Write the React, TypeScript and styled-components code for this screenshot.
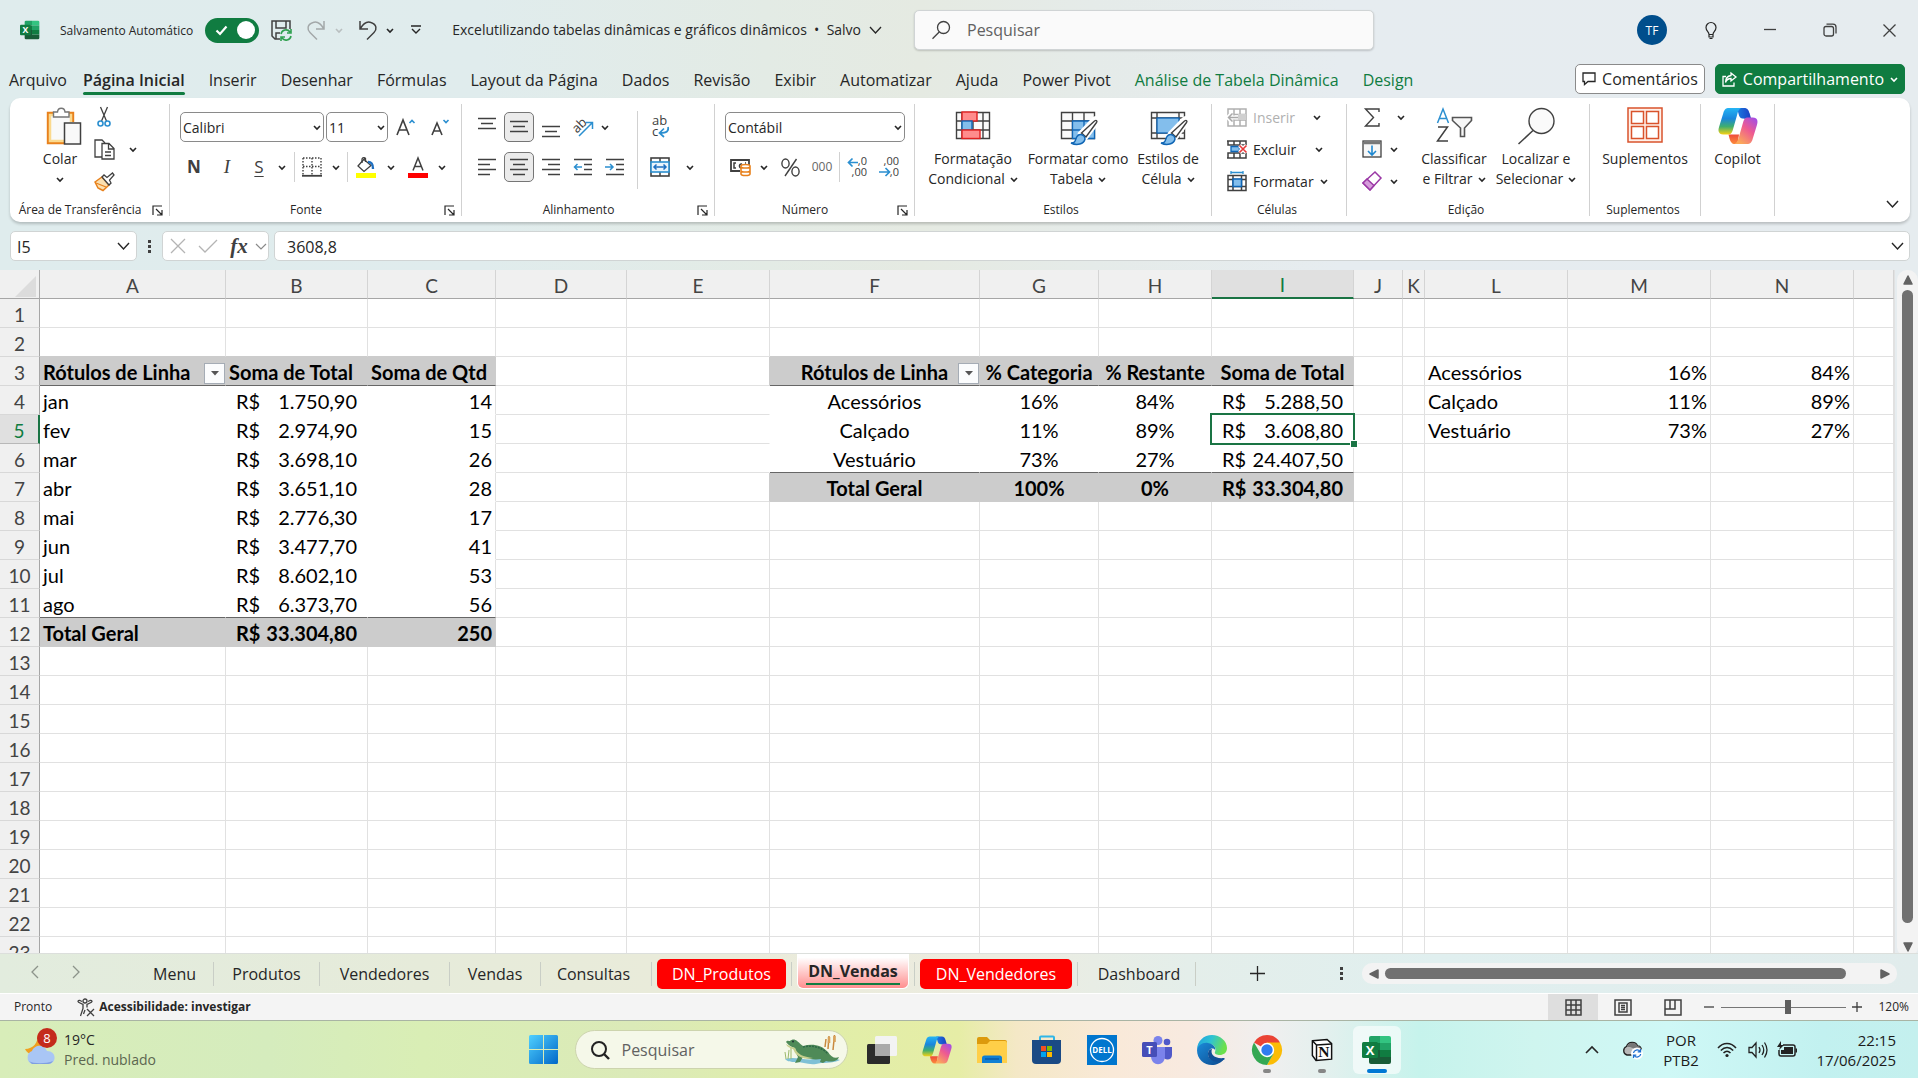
import React from "react";
import styled, { createGlobalStyle, css } from "styled-components";

const UI = `"Open Sans", "Noto Sans", sans-serif`;
const CELL = `Lato, "Open Sans", sans-serif`;
const GREEN = "#107c41";
const INK = "#262626";

const Global = createGlobalStyle`
  *, *::before, *::after { box-sizing: border-box; }
  body { margin: 0; font-family: ${UI}; color: ${INK}; overflow: hidden; }
  button, input, select { font: inherit; color: inherit; }
  button { border: 0; padding: 0; background: none; white-space: nowrap; }
  svg { display: block; flex: none; overflow: visible; }
`;

const Screen = styled.div`
  display: flex;
  flex-direction: column;
  height: 100vh;
  background: linear-gradient(90deg, #dfeced 0%, #e0eced 25%, #e3ebe5 40%, #e5eae2 48%, #e5ebe9 57%, #e6ecf0 70%, #e6ecef 100%);
`;

/* ---------- icons ---------- */

type IconProps = { w?: number; h?: number; box?: string; children?: React.ReactNode };
const Icon = ({ w = 20, h = w, box, children }: IconProps) => (
  <svg width={w} height={h} viewBox={box || `0 0 ${w} ${h}`} fill="none" stroke="#404040" strokeWidth="1.3" aria-hidden="true">
    {children}
  </svg>
);

const Chevron = ({ w = 8, color = "#262626", up = false, stroke = 1.6 }) => {
  const h = Math.round(w / 2) + 2;
  return (
    <Icon w={w + 2} h={h}>
      <path d={up ? `M1 ${h - 1}L${w / 2 + 1} 1L${w + 1} ${h - 1}` : `M1 1L${w / 2 + 1} ${h - 1}L${w + 1} 1`} stroke={color} strokeWidth={stroke} />
    </Icon>
  );
};

const ExcelLogo = ({ size = 20 }) => (
  <svg width={size} height={size} viewBox="0 0 30 30" aria-hidden="true">
    <path d="M9 1h9v7H7V3a2 2 0 0 1 2-2z" fill="#21a366" />
    <path d="M18 1h9a2 2 0 0 1 2 2v5H18z" fill="#33c481" />
    <path d="M7 8h11v7H7z" fill="#107c41" />
    <path d="M18 8h11v7H18z" fill="#21a366" />
    <path d="M18 15h11v7H18z" fill="#107c41" />
    <path d="M7 15h11v7h11v5a2 2 0 0 1-2 2H9a2 2 0 0 1-2-2z" fill="#185c37" />
    <rect x="0" y="7" width="16" height="16" rx="1.5" fill="#107c41" />
    <text x="8" y="20" fontFamily="Open Sans" fontWeight="700" fontSize="13" fill="#fff" textAnchor="middle">X</text>
  </svg>
);

const SaveSync = () => (
  <Icon w={21}>
    <path d="M9 19H4L1 16V1h18v8" strokeWidth="1.5" />
    <path d="M5 1v7h10V1M5 19v-6h4" strokeWidth="1.5" />
    <path d="M10 14a5 5 0 0 1 9-2M20 9v4h-4M20 16a5 5 0 0 1-9 2M10 21v-4h4" stroke="#2fa04f" strokeWidth="1.6" />
  </Icon>
);
const Undo = () => (
  <Icon w={20}>
    <path d="M2 1v8h8M2 9C5 4 9 1 13 2.500c6 2 6 7 3 10L9 19.500" strokeWidth="1.5" />
  </Icon>
);
const Redo = () => (
  <Icon w={20}>
    <path d="M18 1v8h-8M18 9C15 4 11 1 7 2.500c-6 2-6 7-3 10L11 19.500" stroke="#a3a8a9" strokeWidth="1.5" />
  </Icon>
);
const Customize = () => (
  <Icon w={10} h={10}>
    <path d="M0 1h10M1 4l4 4 4-4" strokeWidth="1.4" stroke="#262626" />
  </Icon>
);
const Magnifier = ({ size = 20 }) => (
  <Icon w={size} box="0 0 20 20">
    <circle cx="12.500" cy="7.500" r="6" />
    <path d="M8.200 12L1.500 18.700" />
  </Icon>
);
const Bulb = () => (
  <Icon w={12} h={17}>
    <path d="M4 12.500c0-3-3-3.500-3-7a5 5 0 0 1 10 0c0 3.500-3 4-3 7zM4 12.500V15h4v-2.500M4.500 16.500h3" strokeWidth="1.2" stroke="#262626" />
  </Icon>
);
const Paste = () => (
  <Icon w={44} h={40} box="-8 -1 44 40">
    <rect x="2" y="6" width="25" height="30" fill="#f9f9f9" stroke="none" />
    <path d="M8 6H2v30h16M21 6h6v9" stroke="#e8811c" strokeWidth="2.400" />
    <path d="M8 8H4v26h14M21 8h4v7" stroke="#fbd98d" strokeWidth="2.500" />
    <path d="M7.500 10V5h4c.5-5 7-5 7.500 0h4v5z" fill="#fff" stroke="#767676" strokeWidth="1.400" />
    <rect x="18.500" y="16" width="16" height="21" fill="#f9f9f9" stroke="#404040" strokeWidth="1.500" />
  </Icon>
);
const Cut = () => (
  <Icon w={14} h={20}>
    <path d="M3.500 0l6 14M10.500 0l-6 14" strokeWidth="1.300" />
    <circle cx="3.500" cy="16.500" r="2.500" stroke="#2b8fd0" strokeWidth="1.600" />
    <circle cx="10.500" cy="16.500" r="2.500" stroke="#2b8fd0" strokeWidth="1.600" />
  </Icon>
);
const Copy = () => (
  <Icon w={21}>
    <path d="M8 18H1V1h7l3 3" />
    <path d="M8 4.500h7l5 5V20H8zM14.500 5v5H20M11 13h6M11 16.500h6" fill="#fff" />
  </Icon>
);
const Painter = () => (
  <Icon w={21} h={19}>
    <path d="M1 10l7-5 7 8-6 5.500L6 17l-2-1z" fill="#fbe0b0" stroke="#e8811c" strokeWidth="1.500" />
    <path d="M2 11l10 4" stroke="#e8811c" />
    <path d="M8 5l2-2 3 2.500L18.500 1l1.500 2-4.500 5 1.500 3-2 2z" fill="#fff" />
  </Icon>
);
const Borders = () => (
  <Icon w={20}>
    <path d="M1 1h18M1 1v17M19 1v17M10 1v17M1 9.500h18" strokeDasharray="1.500 1.500" strokeWidth="1.400" />
    <path d="M0 18.800h20" strokeWidth="1.800" />
  </Icon>
);
const Fill = () => (
  <Icon w={20} h={21}>
    <path d="M8 2.500l7 6-7 6-6-5.500 7-8" />
    <path d="M6 6V2a2 2 0 0 1 3.500-.5V5" />
    <path d="M12 5c4 0 5 2 5 7" stroke="#1e6fc0" strokeWidth="2.400" />
    <rect x="0" y="16" width="20" height="5" fill="#ff0" stroke="none" />
  </Icon>
);
const FontColor = () => (
  <Icon w={20} h={21}>
    <path d="M5 13.500L10 1l5 12.500M6.600 9.500h6.800" strokeWidth="1.500" />
    <rect x="0" y="16" width="20" height="5" fill="#f00" stroke="none" />
  </Icon>
);
const GrowFont = () => (
  <Icon w={20} h={18}>
    <path d="M1 17L7 2l6 15M3 12h8" strokeWidth="1.600" />
    <path d="M13.500 5L16 2.500 18.500 5" stroke="#2b8fd0" strokeWidth="1.600" />
  </Icon>
);
const ShrinkFont = () => (
  <Icon w={19} h={18}>
    <path d="M1 17L6 5l5 12M3 13h6.500" strokeWidth="1.600" />
    <path d="M12.500 2L15 4.500 17.500 2" stroke="#2b8fd0" strokeWidth="1.600" />
  </Icon>
);
const Lines = ({ rows }: { rows: [number, number, number][] }) => (
  <Icon w={20}>
    {rows.map(([x, y, len]) => (
      <path key={y} d={`M${x} ${y}.5h${len}`} strokeWidth="1.500" />
    ))}
  </Icon>
);
const alignIcons: Record<string, [number, number, number][]> = {
  top: [[1, 1, 18], [4, 6, 12], [1, 11, 18]],
  middle: [[1, 4, 18], [4, 9, 12], [1, 14, 18]],
  bottom: [[1, 9, 18], [4, 14, 12], [1, 19, 18]],
  left: [[1, 2, 18], [1, 7, 12], [1, 12, 18], [1, 17, 12]],
  center: [[1, 2, 18], [4, 7, 12], [1, 12, 18], [4, 17, 12]],
  right: [[1, 2, 18], [7, 7, 12], [1, 12, 18], [7, 17, 12]],
};
const Indent = ({ out = false }) => (
  <Icon w={20}>
    <path d="M1 2.500h18M11 7.500h8M11 12.500h8M1 17.500h18" strokeWidth="1.500" />
    <path d={out ? "M9 10H1.500M4.500 7l-3 3 3 3" : "M0 10h8M5 7l3 3-3 3"} stroke="#2b8fd0" strokeWidth="1.500" />
  </Icon>
);
const Orient = () => (
  <Icon w={22}>
    <text x="0" y="14" fontFamily="Open Sans" fontSize="13" fill="#404040" stroke="none" transform="rotate(-45 7 10)">ab</text>
    <path d="M7 20L20 7M14 6.500h6.500V13" stroke="#2b8fd0" strokeWidth="1.500" />
  </Icon>
);
const Wrap = () => (
  <Icon w={20} h={22}>
    <text x="2" y="9" fontFamily="Open Sans" fontSize="13" fill="#404040" stroke="none">ab</text>
    <text x="2" y="20" fontFamily="Open Sans" fontSize="13" fill="#404040" stroke="none">c</text>
    <path d="M18 11c1 4-1 6-8 6M14 12.500L9.500 17l4.500 4" stroke="#2b8fd0" strokeWidth="1.700" />
  </Icon>
);
const Merge = () => (
  <Icon w={20}>
    <rect x="1" y="1" width="18" height="18" strokeWidth="1.600" />
    <path d="M10 1v4M10 15v4" strokeWidth="1.500" />
    <rect x="1" y="5" width="18" height="10" fill="#eaf4fb" stroke="#2b8fd0" strokeWidth="1.600" />
    <path d="M4 10h12M6.500 7.500L4 10l2.500 2.500M13.500 7.500L16 10l-2.500 2.500" stroke="#1e6fc0" strokeWidth="1.500" />
  </Icon>
);
const Currency = () => (
  <Icon w={21} h={18}>
    <path d="M10 13H1V2h18v5" strokeWidth="1.800" />
    <path d="M6 5H4v5h2M12 6a2 2 0 1 0-1 4M15 5h1" strokeWidth="1.500" />
    <path d="M11 8v8c0 2 9 2 9 0V8c0-2-9-2-9 0zM11 8.500c0 2 9 2 9 0M11 12.500c0 2 9 2 9 0" fill="#fff" stroke="#e8811c" strokeWidth="1.600" />
  </Icon>
);
const Percent = () => (
  <Icon w={19} h={19}>
    <path d="M15.500 1L4 18" strokeWidth="1.400" />
    <ellipse cx="4.500" cy="5.500" rx="3.600" ry="4.500" strokeWidth="1.400" />
    <ellipse cx="14.500" cy="13.500" rx="3.600" ry="4.500" strokeWidth="1.400" />
  </Icon>
);
const Decimals = ({ less = false }) => (
  <Icon w={21} h={20}>
    <text x="20" y="8" textAnchor="end" fontFamily="Open Sans" fontSize="11" fill="#404040" stroke="none">{less ? ",00" : ",0"}</text>
    <text x="20" y="19" textAnchor="end" fontFamily="Open Sans" fontSize="11" fill="#404040" stroke="none">{less ? ",0" : ",00"}</text>
    <path d={less ? "M0 15h10M6.500 11l4 4-4 4" : "M11 5.500H2M5.500 1.500l-4 4 4 4"} stroke="#2b8fd0" strokeWidth="1.700" />
  </Icon>
);
const CondFormat = () => (
  <Icon w={36} h={40}>
    <path d="M1.500 6.500h33v26h-33zM1.500 15h33M1.500 24h33M7 6v26M18 6v26M28 6v26" fill="#fafafa" strokeWidth="1.400" />
    <rect x="7" y="6" width="15" height="9" fill="#ff8c8c" stroke="#e02020" strokeWidth="1.400" />
    <rect x="7" y="15" width="10" height="9" fill="#83beec" stroke="#1066b5" strokeWidth="1.400" />
    <rect x="7" y="24" width="18" height="8.500" fill="#ff8c8c" stroke="#e02020" strokeWidth="1.400" />
  </Icon>
);
const Brush = () => (
  <>
    <path d="M21 27L34 13.500c3-2 4.500 0 3 2.500L26 31z" fill="#fff" stroke="#fff" strokeWidth="5" />
    <path d="M21.500 27L34.500 15c2-1.500 3 0 2 1.500L26 31z" fill="#fff" strokeWidth="1.400" />
    <path d="M11 37c5 0 4-3 6-6.500 3-4 8-1 8 2.500-1 5-8 7-14 4z" fill="#83beec" stroke="#1066b5" strokeWidth="1.400" />
  </>
);
const TableFormat = () => (
  <Icon w={36} h={40}>
    <path d="M1.500 6.500h33v26h-33zM1.500 15h33M1.500 24h33M12.500 6v26M24 6v26" fill="#fafafa" strokeWidth="1.400" />
    <path d="M12.500 15h22v17.500h-22z" fill="#83beec" stroke="#1066b5" />
    <path d="M12.500 24h22M24 15v17" stroke="#1066b5" />
    <Brush />
  </Icon>
);
const CellStyle = () => (
  <Icon w={36} h={40}>
    <path d="M1.500 6.500h33v26h-33zM1.500 12h33M1.500 27h33M7 6v26M29 6v26" fill="#fafafa" strokeWidth="1.400" />
    <rect x="7" y="12" width="22" height="15" fill="#83beec" stroke="#1066b5" />
    <Brush />
  </Icon>
);
const InsertCells = () => (
  <Icon w={20} h={19}>
    <path d="M1 1h18v17H1zM1 6.500h18M1 12h18M7 1v17M13 1v17" stroke="#b0b0b0" strokeWidth="1.500" />
    <rect x="11" y="6" width="8" height="6" fill="#d0d0d0" stroke="none" />
    <path d="M11 9.500H1M5 5L1 9.500 5 14" stroke="#fff" strokeWidth="4" />
    <path d="M11 9.500H1.500M5.500 5.500l-4 4 4 4" stroke="#a8a8a8" strokeWidth="1.500" />
  </Icon>
);
const DeleteCells = () => (
  <Icon w={20} h={19}>
    <path d="M0 1h19v4M1 1v4h18M1 18v-5h18M0 18h19v-5M7 1v4M13 1v4M7 13v5M13 13v5" strokeWidth="1.500" />
    <path d="M4 6.500h7l2 2.500-2 2.500H4z" fill="#83beec" stroke="#1066b5" />
    <path d="M12.500 5.500l7 7M19.500 5.500l-7 7" stroke="#fff" strokeWidth="4" />
    <path d="M12.500 5.500l7 7M19.500 5.500l-7 7" stroke="#e63a3a" strokeWidth="1.600" />
  </Icon>
);
const FormatCells = () => (
  <Icon w={20} h={20}>
    <path d="M1 4.500h18v15H1zM1 8.500h18M1 15.500h18M6 4.500v15M14.500 4.500v15" strokeWidth="1.500" />
    <rect x="6" y="8" width="8.500" height="7.500" fill="#83beec" stroke="#1066b5" strokeWidth="1.500" />
    <path d="M4 1.500h12M4 0v3M16 0v3" stroke="#2b8fd0" />
  </Icon>
);
const Sigma = () => (
  <Icon w={16} h={19}>
    <path d="M15 4V1H1.500l8 8.500-8 8.500H15v-3" strokeWidth="1.400" />
  </Icon>
);
const FillDown = () => (
  <Icon w={20} h={18}>
    <rect x="1" y="1" width="18" height="16" fill="#f7f7f7" />
    <path d="M1 3h18" strokeWidth="2.500" stroke="#777" />
    <path d="M10 5.500V15M6 11l4 4 4-4" stroke="#1e88d0" strokeWidth="1.600" />
  </Icon>
);
const Eraser = () => (
  <Icon w={20}>
    <path d="M1 12L13 1l6 6L8 19z" fill="#fff" stroke="#9a37a5" strokeWidth="1.500" />
    <path d="M1 12l4-4 7 6.500L8 19z" fill="#d69ddb" stroke="#9a37a5" strokeWidth="1.500" />
  </Icon>
);
const SortFilter = () => (
  <Icon w={38} h={40}>
    <path d="M2.500 17L8 3l5.500 14M4.500 12.500h7" stroke="#2b8fd0" strokeWidth="1.500" />
    <path d="M3 21h9.500L2.500 35H13" strokeWidth="1.500" />
    <path d="M17.500 11.500h19v3L29.500 22v8.500h-4V22l-8-7.500z" fill="#f7f7f7" stroke="#555" strokeWidth="1.600" />
  </Icon>
);
const FindSelect = () => (
  <Icon w={38} h={40}>
    <circle cx="24.500" cy="15" r="12.500" fill="#fafafa" strokeWidth="1.400" />
    <path d="M16 24.500L1.500 38" strokeWidth="1.500" />
  </Icon>
);
const Addins = () => (
  <Icon w={36} h={40}>
    <g stroke="#d9532c" strokeWidth="1.500">
      <rect x="1" y="2" width="34" height="34" fill="#fff1ea" />
      <rect x="4.500" y="5.500" width="12" height="12" fill="#fff" />
      <rect x="19.500" y="5.500" width="12" height="12" fill="#fff" />
      <rect x="4.500" y="20.500" width="12" height="12" fill="#fff" />
      <rect x="19.500" y="20.500" width="12" height="12" fill="#fff" />
    </g>
  </Icon>
);
const Copilot = ({ size = 38, id = "a" }) => (
  <svg width={size} height={size} viewBox="0 0 38 38" aria-hidden="true">
    <defs>
      <linearGradient id={`cb${id}`} x1="0" y1="0" x2="0" y2="1">
        <stop offset="0" stopColor="#25b4f4" /><stop offset=".4" stopColor="#1a86dc" /><stop offset=".7" stopColor="#3fae6e" /><stop offset="1" stopColor="#f6d112" />
      </linearGradient>
      <linearGradient id={`cd${id}`} x1="0" y1="0" x2="1" y2="0">
        <stop offset="0" stopColor="#1c7be0" /><stop offset="1" stopColor="#1b3fc4" />
      </linearGradient>
      <linearGradient id={`cp${id}`} x1="1" y1="0" x2=".3" y2="1">
        <stop offset="0" stopColor="#9a4cf0" /><stop offset=".5" stopColor="#ee5a91" /><stop offset="1" stopColor="#fba95a" />
      </linearGradient>
      <linearGradient id={`co${id}`} x1="0" y1="0" x2="0" y2="1">
        <stop offset="0" stopColor="#ef4c3a" /><stop offset="1" stopColor="#fb8a3c" />
      </linearGradient>
    </defs>
    <path d="M18 2h7c3 0 4 2 5 5l1.500 5H26c-3 0-5 0-6-3z" fill={`url(#cd${id})`} />
    <path d="M10 27h10l-1 6c-1 3-1 3-3 3-3 0-4-2-5-5z" fill={`url(#co${id})`} />
    <path d="M10 2h12c-2 1-3 3-4 7l-4 14c-1 3-2 4-4 4H5c-5 0-5-4-4-7L5 7c1-4 3-5 5-5z" fill={`url(#cb${id})`} />
    <path d="M28 36H16c2-1 3-3 4-7l4-14c1-3 2-4 4-4h5c5 0 5 4 4 7l-4 13c-1 4-3 5-5 5z" fill={`url(#cp${id})`} />
  </svg>
);
const Launcher = () => (
  <Icon w={11} h={11}>
    <path d="M10 1H1v9M4 4l6 6M10 5v5H5" stroke="#262626" strokeWidth="1.200" />
  </Icon>
);

/* ---------- title bar ---------- */

const TitleBar = styled.header`
  display: grid;
  grid-template-columns: 914fr 460fr 544fr;
  align-items: center;
  height: 60px;
  flex: none;
`;
const Quick = styled.div<{ $gap?: number }>`
  display: flex;
  align-items: center;
  gap: ${(p) => p.$gap ?? 12}px;
`;
const TitleLeft = styled(Quick)`
  padding-left: 20px;
  height: 60px;
`;
const Small = styled.span<{ $bold?: boolean }>`
  font-size: 12px;
  line-height: 18px;
  white-space: nowrap;
  font-weight: ${(p) => (p.$bold ? 700 : 400)};
`;
const AutoSave = styled.label`
  display: flex;
  align-items: center;
  gap: 12px;
  padding-left: 8px;
  font-size: 12px;
  white-space: nowrap;
`;
const Toggle = styled.span`
  display: grid;
  width: 54px;
  height: 25px;
  border-radius: 13px;
  background: ${GREEN};
  align-items: center;
  > * { grid-area: 1 / 1; }
  > svg { margin-left: 10px; }
`;
const ToggleInput = styled.input`
  appearance: none;
  margin: 0 4px 0 0;
  width: 18px;
  height: 18px;
  border-radius: 50%;
  background: #fff;
  justify-self: end;
`;
const Plain = styled.button<{ $w?: number; $h?: number }>`
  display: inline-flex;
  align-items: center;
  justify-content: center;
  flex: none;
  width: ${(p) => (p.$w ? `${p.$w}px` : "auto")};
  height: ${(p) => p.$h ?? 30}px;
`;
const DocTitle = styled.button`
  display: flex;
  align-items: center;
  gap: 8px;
  margin-left: 16px;
  font-size: 14px;
  line-height: 20px;
`;
const SearchBox = styled.label`
  display: flex;
  align-items: center;
  gap: 16px;
  height: 40px;
  padding: 0 16px;
  border: 1px solid #d0d4d5;
  border-radius: 5px;
  background: #fafafa;
  box-shadow: 0 1px 2px rgba(0, 0, 0, 0.18);
`;
const SearchInput = styled.input`
  flex: 1;
  min-width: 0;
  border: 0;
  padding: 0;
  background: none;
  font-size: 16px;
  outline: none;
  &::placeholder { color: #616161; opacity: 1; }
`;
const WindowKeys = styled.div`
  display: flex;
  justify-content: flex-end;
`;
const Avatar = styled.span`
  display: grid;
  place-items: center;
  width: 30px;
  height: 30px;
  border-radius: 50%;
  background: #004e8c;
  color: #fff;
  font-size: 12px;
`;

/* ---------- ribbon tabs ---------- */

const TabRow = styled.nav`
  display: flex;
  align-items: center;
  height: 38px;
  padding: 0 13px 0 9px;
  flex: none;
`;
const RibbonTab = styled.a<{ $on?: boolean; $ctx?: boolean }>`
  display: flex;
  flex-direction: column;
  margin-right: 24px;
  font-size: 16px;
  line-height: 24px;
  padding: 8px 0 3px;
  color: ${(p) => (p.$ctx ? "#107c41" : INK)};
  text-decoration: none;
  white-space: nowrap;
  font-weight: ${(p) => (p.$on ? 600 : 400)};
  &:first-child { margin-right: 16px; }
  &::after {
    content: "";
    height: 3px;
    border-radius: 2px;
    background: ${(p) => (p.$on ? GREEN : "transparent")};
  }
`;
const TabActions = styled.div`
  display: flex;
  gap: 10px;
  margin-left: auto;
`;
const ActionButton = styled.button<{ $primary?: boolean }>`
  display: flex;
  align-items: center;
  gap: 6px;
  height: 30px;
  padding: 0 6px;
  border: 1px solid ${(p) => (p.$primary ? GREEN : "#8a8a8a")};
  border-radius: 5px;
  background: ${(p) => (p.$primary ? GREEN : "#fff")};
  color: ${(p) => (p.$primary ? "#fff" : INK)};
  font-size: 16px;
`;

/* ---------- ribbon ---------- */

const Ribbon = styled.section`
  display: flex;
  height: 124px;
  margin: 0 8px 0 10px;
  padding: 6px 0;
  border-radius: 10px;
  background: #fff;
  box-shadow: 0 2px 3px rgba(0, 0, 0, 0.2);
  flex: none;
`;
const Group = styled.div<{ $w: number }>`
  display: flex;
  flex-direction: column;
  width: ${(p) => p.$w}px;
  border-right: 1px solid #d1d1d1;
  flex: none;
`;
const GroupBody = styled.div<{ $pad?: number; $center?: boolean }>`
  display: flex;
  flex: 1;
  padding-left: ${(p) => p.$pad ?? 0}px;
  justify-content: ${(p) => (p.$center ? "center" : "flex-start")};
`;
const GroupFoot = styled.div`
  display: flex;
  align-items: center;
  height: 12px;
  padding-right: 4px;
  font-size: 12px;
  line-height: 18px;
  white-space: nowrap;
`;
const FootLabel = styled.span`
  flex: 1;
  text-align: center;
`;
const TwoRows = styled.div`
  display: flex;
  flex-direction: column;
  gap: 10px;
  padding-top: 8px;
`;
const Row = styled.div<{ $gap?: number }>`
  display: flex;
  align-items: center;
  height: 30px;
  gap: ${(p) => p.$gap ?? 0}px;
`;
const ThreeRows = styled.div<{ $pad?: number }>`
  display: flex;
  flex-direction: column;
  padding: 0 0 0 ${(p) => p.$pad ?? 0}px;
`;
const SlimRow = styled.div`
  display: flex;
  align-items: center;
  height: 32px;
  margin-top: -3px;
  & + & { margin-top: 0; }
`;
const LabelledButton = styled.button<{ $dim?: boolean; $w: number }>`
  display: flex;
  align-items: center;
  gap: 6px;
  width: ${(p) => p.$w}px;
  height: 30px;
  font-size: 14px;
  color: ${(p) => (p.$dim ? "#b0b0b0" : INK)};
`;
const Big = styled.button<{ $w: number }>`
  display: flex;
  flex-direction: column;
  align-items: center;
  width: ${(p) => p.$w}px;
  padding-top: 2px;
  font-size: 14px;
  line-height: 20px;
  > svg { margin-bottom: 3px; }
`;
const BigLine = styled.span`
  display: flex;
  align-items: center;
  gap: 5px;
  min-height: 20px;
`;
const Sep = styled.span<{ $m?: number }>`
  width: 1px;
  height: 30px;
  margin: 0 ${(p) => p.$m ?? 2}px;
  background: #d1d1d1;
  flex: none;
`;
const TallSep = styled(Sep)`
  height: 78px;
  margin: 7px 7px 0;
`;
const Picker = styled.div<{ $w: number }>`
  display: grid;
  align-items: center;
  width: ${(p) => p.$w}px;
  > * { grid-area: 1 / 1; }
  > svg { justify-self: end; margin-right: 3px; pointer-events: none; }
`;
const PickerSelect = styled.select`
  appearance: none;
  width: 100%;
  height: 30px;
  padding: 0 2px;
  border: 1px solid #8a8a8a;
  border-radius: 5px;
  background: #fff;
  font-size: 14px;
`;
const Tool = styled.button<{ $on?: boolean; $w?: number }>`
  display: grid;
  place-items: center;
  width: ${(p) => p.$w ?? 30}px;
  height: 30px;
  border-radius: 5px;
  flex: none;
  ${(p) => p.$on && css`border: 1px solid #767676; background: #ebebeb;`}
`;
const Letter = styled.span<{ $kind: "b" | "i" | "u" | "n" }>`
  font-size: ${(p) => (p.$kind === "n" ? 12 : 17)}px;
  line-height: 20px;
  color: ${(p) => (p.$kind === "n" ? "#666" : "#404040")};
  ${(p) => p.$kind === "b" && "font-weight: 700;"}
  ${(p) => p.$kind === "i" && `font-style: italic; font-family: "Liberation Serif", serif; font-size: 19px;`}
  ${(p) => p.$kind === "u" && "text-decoration: underline; text-underline-offset: 3px;"}
`;

const Drop = ({ w = 18, label }: { w?: number; label: string }) => (
  <Plain $w={w} aria-label={label}><Chevron w={6} /></Plain>
);
const CollapseSlot = styled.div`
  display: flex;
  align-items: flex-end;
  padding-right: 2px;
`;
const Spacer = styled.span`
  flex: 1;
`;

/* ---------- formula bar ---------- */

const FormulaBar = styled.div`
  display: flex;
  align-items: center;
  height: 48px;
  padding: 0 8px 0 10px;
  flex: none;
`;
const Field = styled.div<{ $w?: number }>`
  display: flex;
  align-items: center;
  height: 30px;
  border: 1px solid #d0d4d4;
  border-radius: 5px;
  background: #fff;
  ${(p) => (p.$w ? `width: ${p.$w}px; flex: none;` : "flex: 1; margin-left: 5px;")}
`;
const FieldInput = styled.input<{ $pad: number }>`
  flex: 1;
  min-width: 0;
  height: 28px;
  border: 0;
  padding: 1px 0 0 ${(p) => p.$pad}px;
  background: none;
  font-size: 16px;
  outline: none;
`;
const Fx = styled.span`
  font: italic 700 21px "Liberation Serif", serif;
  color: #404040;
`;
const Dots = styled.span<{ $m: number }>`
  display: flex;
  flex-direction: column;
  gap: 2px;
  margin: 0 ${(p) => p.$m}px;
  &::before, &::after, > i { content: ""; width: 3px; height: 3px; background: #404040; }
`;

/* ---------- sheet ---------- */

const SheetArea = styled.main`
  display: flex;
  flex: 1;
  min-height: 0;
`;
const GridView = styled.div`
  flex: 1;
  min-width: 0;
  overflow: hidden;
  background: #fff;
  border-right: 1px solid #e1e1e1;
`;
const Grid = styled.table`
  width: 100%;
  table-layout: fixed;
  border-collapse: separate;
  border-spacing: 0;
  font-family: ${CELL};
  font-size: 19px;
  line-height: 25px;
  color: #000;
`;
const Head = styled.th<{ $on?: boolean }>`
  height: 29px;
  padding: 2px 0 0;
  font-weight: 400;
  color: ${(p) => (p.$on ? "#107c41" : "#444")};
  background: ${(p) => (p.$on ? "#e0e0e0" : "#f0f0f0")};
  border-bottom: ${(p) => (p.$on ? "2px solid #1a7444" : "1px solid #a6a6a6")};
  border-right: 1px solid #d4d4d4;
`;
const Corner = styled(Head)`
  border-right-color: #ababab;
  > svg { margin: 2px 3px 0 auto; }
`;
const RowHead = styled.th<{ $on?: boolean }>`
  height: 29px;
  padding: 2px 0 0;
  font-weight: 400;
  color: ${(p) => (p.$on ? "#107c41" : "#444")};
  background: ${(p) => (p.$on ? "#e0e0e0" : "#f0f0f0")};
  border-bottom: 1px solid ${(p) => (p.$on ? "#b8b8b8" : "#d8d8d8")};
  border-right: ${(p) => (p.$on ? "2px solid #1a7444" : "1px solid #a6a6a6")};
`;
type CellLook = { $align?: string; $bold?: boolean; $fill?: boolean; $r?: string; $b?: string; $money?: boolean };
const Cell = styled.td<CellLook>`
  position: relative;
  height: 29px;
  padding: ${(p) => (p.$money ? "2px 10px 0" : "2px 3px 0")};
  font-size: 20px;
  white-space: nowrap;
  text-align: ${(p) => p.$align || "left"};
  font-weight: ${(p) => (p.$bold ? 700 : 400)};
  background: ${(p) => (p.$fill ? "#ccc" : "#fff")};
  border-right: 1px solid ${(p) => p.$r || "#e1e1e1"};
  border-bottom: 1px solid ${(p) => p.$b || "#e1e1e1"};
`;
const Money = styled.span`
  display: flex;
  justify-content: space-between;
`;
const FilterButton = styled.button`
  position: absolute;
  right: 0;
  bottom: 1px;
  display: grid;
  place-items: center;
  width: 21px;
  height: 21px;
  border: 1px solid #a5acb5;
  background: #fbfcfd;
`;
const Selection = styled.span`
  position: absolute;
  inset: -2px;
  border: 2px solid #1a7444;
  z-index: 1;
  &::after {
    content: "";
    position: absolute;
    right: -4px;
    bottom: -4px;
    width: 6px;
    height: 6px;
    background: #1a7444;
    outline: 1px solid #fff;
  }
`;
const VScroll = styled.div`
  display: flex;
  flex-direction: column;
  align-items: center;
  gap: 5px;
  width: 21px;
  margin: 0 0 -4px 2px;
  padding: 5px 0 5px;
  border-radius: 10px;
  background: #f3f3f3;
`;
const Thumb = styled.span<{ $v?: boolean }>`
  border-radius: 6px;
  background: #717171;
  ${(p) => (p.$v ? "width: 11px; flex: 1; margin-bottom: 14px;" : "height: 11px; flex: 1; margin-right: 28px;")}
`;

const columns: [string, number | null][] = [
  ["A", 186], ["B", 142], ["C", 128], ["D", 131], ["E", 143], ["F", 210], ["G", 119], ["H", 113],
  ["I", 142], ["J", 49], ["K", 22], ["L", 143], ["M", 143], ["N", 143], ["", null],
];

const data: Record<string, string> = {};
const put = (row: number, cols: string, values: string[]) => values.forEach((v, i) => { data[cols[i] + row] = v; });
put(3, "ABC", ["Rótulos de Linha", "Soma de Total", "Soma de Qtd"]);
[
  ["jan", "1.750,90", "14"], ["fev", "2.974,90", "15"], ["mar", "3.698,10", "26"], ["abr", "3.651,10", "28"],
  ["mai", "2.776,30", "17"], ["jun", "3.477,70", "41"], ["jul", "8.602,10", "53"], ["ago", "6.373,70", "56"],
  ["Total Geral", "33.304,80", "250"],
].forEach((v, i) => put(4 + i, "ABC", v));
put(3, "FGHI", ["Rótulos de Linha", "% Categoria", "% Restante", "Soma de Total"]);
[
  ["Acessórios", "16%", "84%", "5.288,50"], ["Calçado", "11%", "89%", "3.608,80"],
  ["Vestuário", "73%", "27%", "24.407,50"], ["Total Geral", "100%", "0%", "33.304,80"],
].forEach((v, i) => put(4 + i, "FGHI", v));
[["Acessórios", "16%", "84%"], ["Calçado", "11%", "89%"], ["Vestuário", "73%", "27%"]].forEach((v, i) => put(3 + i, "LMN", v));

const look = (col: string, row: number): CellLook => {
  const pivots = [{ cols: "ABC", last: 12, before: "" }, { cols: "FGHI", last: 7, before: "E" }];
  for (const p of pivots) {
    const banded = row === 3 || row === p.last;
    if (col && p.before === col && row >= 3 && row <= p.last) return { $r: banded ? "#ccc" : "#fff" };
    if (!col || !p.cols.includes(col)) continue;
    if (row === 2) return { $b: "#ccc" };
    if (row < 3 || row > p.last) continue;
    const end = col === p.cols[p.cols.length - 1];
    const money = row > 3 && (col === "B" || col === "I");
    return {
      $fill: banded,
      $bold: banded,
      $money: money,
      $align: p.cols === "FGHI" ? "center" : row > 3 && col === "C" ? "right" : "left",
      $r: banded ? "#ccc" : end ? "#e1e1e1" : "#fff",
      $b: row === 3 || row === p.last - 1 ? "#666" : banded ? "#ccc" : "#fff",
    };
  }
  return col === "M" || col === "N" ? { $align: "right" } : {};
};

const Sheet = () => (
  <Grid>
    <colgroup>
      <col width={40} />
      {columns.map(([name, w]) => <col key={name} width={w ?? undefined} />)}
    </colgroup>
    <thead>
      <tr>
        <Corner aria-label="Selecionar tudo"><Icon w={21} h={21}><path d="M21 0v21H0z" fill="#dcdcdc" stroke="none" /></Icon></Corner>
        {columns.map(([name]) => <Head key={name} scope="col" $on={name === "I"}>{name}</Head>)}
      </tr>
    </thead>
    <tbody>
      {Array.from({ length: 23 }, (_, i) => i + 1).map((row) => (
        <tr key={row}>
          <RowHead scope="row" $on={row === 5}>{row}</RowHead>
          {columns.map(([col]) => {
            const style = look(col, row);
            const text = col ? data[col + row] : undefined;
            return (
              <Cell key={col} {...style}>
                {style.$money ? <Money><span>R$</span><span>{text}</span></Money> : text}
                {row === 3 && (col === "A" || col === "F") && (
                  <FilterButton aria-label="Filtrar rótulos">
                    <Icon w={8} h={5}><path d="M0 0h8L4 4.500z" fill="#555" stroke="none" /></Icon>
                  </FilterButton>
                )}
                {col === "I" && row === 5 && <Selection />}
              </Cell>
            );
          })}
        </tr>
      ))}
    </tbody>
  </Grid>
);

/* ---------- sheet tabs ---------- */

const SheetBar = styled.div`
  display: flex;
  align-items: center;
  height: 40px;
  padding-right: 21px;
  border-top: 1px solid #dcdfdc;
  background: linear-gradient(90deg, #e2ecde 0%, #e6ebda 22%, #eaebda 38%, #ecece0 52%, #e4eeea 62%, #e0efef 75%, #e1ecec 100%);
  flex: none;
`;
const NavArrows = styled.div`
  display: flex;
  gap: 33px;
  padding: 0 56px 4px 31px;
`;
const TabList = styled.div`
  display: flex;
  align-items: center;
  align-self: stretch;
`;
const SheetTab = styled.button<{ $red?: boolean; $on?: boolean; $w: number }>`
  width: ${(p) => p.$w}px;
  height: 30px;
  flex: none;
  font-size: 16px;
  line-height: 24px;
  border-radius: 5px;
  ${(p) => p.$red && "background: #ff0000; color: #fff;"}
  ${(p) => p.$on && css`
    align-self: flex-start;
    height: 35px;
    padding: 5px 0 3px;
    border: 1px solid #fff;
    border-top: 0;
    border-radius: 0 0 6px 6px;
    font-weight: 700;
    background: linear-gradient(#fff 10%, #ff8f8f);
    span { display: block; margin: 0 8px; border-bottom: 2px solid ${GREEN}; }
  `}
`;
const TabSep = styled(Sep)`
  height: 24px;
  background: #c9cec6;
`;
const HScroll = styled.div`
  display: flex;
  align-items: center;
  gap: 6px;
  height: 21px;
  width: 535px;
  padding: 0 7px;
  border-radius: 10px;
  background: #f3f3f3;
`;

/* ---------- status bar ---------- */

const StatusBar = styled.footer`
  display: flex;
  align-items: center;
  height: 28px;
  padding: 0 9px 0 14px;
  background: #f4f4f4;
  border-top: 1px solid #fff;
  border-bottom: 1px solid #a9b4a4;
  flex: none;
`;
const Access = styled.button`
  display: flex;
  align-items: center;
  gap: 4px;
  margin-left: 25px;
`;
const ViewButton = styled.button<{ $on?: boolean }>`
  display: grid;
  place-items: center;
  width: 50px;
  height: 26px;
  background: ${(p) => (p.$on ? "#dedede" : "transparent")};
`;
const Zoom = styled.input`
  appearance: none;
  width: 125px;
  height: 16px;
  margin: 0 6px 0 1px;
  background: linear-gradient(#767676, #767676) center / 100% 1px no-repeat;
  &::-webkit-slider-thumb {
    appearance: none;
    width: 6px;
    height: 14px;
    background: #5f5f5f;
  }
`;
const ZoomText = styled(Small)`
  width: 47px;
  text-align: right;
`;

/* ---------- taskbar ---------- */

const Taskbar = styled.div`
  display: grid;
  grid-template-columns: 1fr auto 1fr;
  align-items: center;
  height: 57px;
  background: linear-gradient(90deg, #d8edb9 0%, #d5ecbd 14%, #d9eeb5 22%, #dbeab8 33%, #e0eea9 42%, #e6eda6 50%, #f4e8c6 53%, #f9e9d8 58%, #f8eae0 62%, #f0efef 66%, #e4f0ee 69%, #c6f3ec 74%, #cff5ef 80%, #cff8f6 87%, #c2f1f0 95%, #c4f0ee 100%);
  flex: none;
`;
const Weather = styled.button`
  display: flex;
  align-items: center;
  gap: 7px;
  padding-left: 25px;
  justify-self: start;
  text-align: left;
  font-size: 14px;
  line-height: 20px;
  div:last-child div:last-child { color: #5c6650; }
`;
const Center = styled.div`
  display: flex;
  align-items: center;
  gap: 7px;
`;
const Start = styled(Plain)`
  padding-left: 8px;
`;
const TaskSearch = styled.label`
  display: flex;
  align-items: center;
  gap: 12px;
  width: 273px;
  height: 39px;
  margin: 0 3px 0 6px;
  padding: 0 6px 0 14px;
  border: 1px solid #cdd4ae;
  border-radius: 20px;
  background: #f5f8e9;
`;
const App48 = styled.button<{ $on?: boolean; $run?: boolean }>`
  display: flex;
  flex-direction: column;
  align-items: center;
  justify-content: flex-end;
  width: 48px;
  height: 48px;
  border-radius: 6px;
  gap: ${(p) => (p.$run || p.$on ? 4 : 0)}px;
  padding-bottom: ${(p) => (p.$run || p.$on ? 1 : 9)}px;
  background: ${(p) => (p.$on ? "rgba(255,255,255,.6)" : "none")};
  ${(p) => (p.$run || p.$on) && css`
    &::after {
      content: "";
      width: ${p.$on ? 20 : 8}px;
      height: 4px;
      border-radius: 2px;
      background: ${p.$on ? "#0078d4" : "#868686"};
    }
  `}
`;
const Tray = styled.div`
  display: flex;
  align-items: center;
  justify-self: end;
  padding-right: 22px;
  font-size: 15px;
  line-height: 20px;
  color: #1b1b1b;
  white-space: nowrap;
`;
const TrayText = styled.div<{ $w: number; $right?: boolean }>`
  width: ${(p) => p.$w}px;
  text-align: ${(p) => (p.$right ? "right" : "center")};
`;

const WeatherIcon = () => (
  <svg width="32" height="44" viewBox="0 0 32 44" aria-hidden="true">
    <path d="M12 7c2 7-4 14-12 14 3 6 10 8 16 5l4-12z" fill="#f0a020" />
    <path d="M7 36a7 7 0 0 1 0-13c2-6 12-8 15 0 10 0 10 13 1 13z" fill="#a9c6f5" />
    <path d="M4 33c4 3 17 3 24 0-1 2-3 3-5 3H7z" fill="#7f9fe0" />
    <circle cx="22" cy="10" r="10" fill="#c42b1c" />
    <text x="22" y="15" fontFamily="Open Sans" fontSize="13" fill="#fff" textAnchor="middle">8</text>
  </svg>
);
const WinLogo = () => (
  <svg width="30" height="30" viewBox="0 0 30 30" aria-hidden="true">
    <defs><linearGradient id="win" x1="0" y1="0" x2="1" y2="1"><stop offset="0" stopColor="#4fd0ff" /><stop offset="1" stopColor="#0067c8" /></linearGradient></defs>
    <path d="M0 1.500Q0 0 1.500 0H14v14H0zM15 0h12.500Q29 0 29 1.500V14H15zM0 15h14v14H1.500Q0 29 0 27.500zM15 15h14v12.500q0 1.500-1.500 1.500H15z" fill="url(#win)" />
  </svg>
);
const Gator = () => (
  <svg width="58" height="30" viewBox="0 0 58 30" aria-hidden="true">
    <path d="M2 24c10-3 20 2 30 0 8-1 16-2 25 1-8 4-18 2-24 4-8 1-14-2-20-2-5 0-8 0-11-3z" fill="#7fc0d6" />
    <path d="M45 14l1-13M50 15l1.500-15M42 12l1-8" stroke="#c8893f" strokeWidth="1.500" fill="none" />
    <path d="M46 2v6M51.500 1v6" stroke="#d9a25a" strokeWidth="2.600" fill="none" />
    <path d="M5 24l1-9M8 24V12M3 24l-1-7" stroke="#9cb86a" fill="none" />
    <path d="M3 7c1-2 3-1 4-1 2-2 5-2 7 0 3 2 4 4 6 5 9-3 19-1 25 6 3 5 7 7 11 5-2 5-8 5-13 4l-3 2-3-1 1-3c-6 1-13 0-18-2l-3 5-5 1 3-6c-2-3-2-6-3-9-3-1-6-2-9-6z" fill="#4f8a58" />
    <path d="M3 9c3 2 6 3 9 4 2 6 8 9 18 10-6 2-13 0-17-4-2-2-2-4-3-5-3-1-6-2-7-5z" fill="#c7cf8d" />
    <path d="M20 12c9-2 19 0 25 7" stroke="#2f6848" strokeWidth="1.500" strokeDasharray="2 1" fill="none" />
    <circle cx="10" cy="6.500" r="1" fill="#223333" />
  </svg>
);
const TaskView = () => (
  <svg width="30" height="30" viewBox="0 0 30 30" aria-hidden="true">
    <rect x="0" y="9" width="23" height="20" rx="1.500" fill="#2b2b2b" />
    <rect x="8" y="1" width="22" height="20" rx="1.500" fill="#f3f3f3" />
    <path d="M8 9h15v12H9.500Q8 21 8 19.500z" fill="#aaa" />
  </svg>
);
const Explorer = () => (
  <svg width="30" height="30" viewBox="0 0 30 30" aria-hidden="true">
    <path d="M0 4q0-2 2-2h8l3 3h15q2 0 2 2v4H0z" fill="#dc9a0c" />
    <path d="M0 9h10l3-3h15q2 0 2 2v20H0z" fill="#ffcf48" />
    <path d="M5 28v-5q0-2.500 2.500-2.500h15Q25 20.500 25 23v5z" fill="#0f7fd4" />
    <path d="M8 24h14" stroke="#0a5aa8" strokeWidth="1.500" />
  </svg>
);
const Store = () => (
  <svg width="30" height="30" viewBox="0 0 30 30" aria-hidden="true">
    <path d="M8 6V2.500Q8 1.500 9 1.500h12q1 0 1 1V6" fill="none" stroke="#2fb6e8" strokeWidth="2" />
    <path d="M0 5h29v20q0 4-4 4H4q-4 0-4-4z" fill="#1a4a85" />
    <path d="M9 11h5v5H9z" fill="#f25022" /><path d="M15 11h5v5h-5z" fill="#7fba00" />
    <path d="M9 17h5v5H9z" fill="#00a4ef" /><path d="M15 17h5v5h-5z" fill="#ffb900" />
  </svg>
);
const Dell = () => (
  <svg width="30" height="30" viewBox="0 0 30 30" aria-hidden="true">
    <path d="M0 0h30v30H0z" fill="#0076ce" />
    <circle cx="15" cy="15" r="11.500" fill="none" stroke="#fff" strokeWidth="1.300" />
    <text x="15" y="18" fontFamily="Open Sans" fontWeight="700" fontSize="8" fill="#fff" textAnchor="middle">DELL</text>
  </svg>
);
const Teams = () => (
  <svg width="30" height="30" viewBox="0 0 30 30" aria-hidden="true">
    <circle cx="25" cy="7" r="3.300" fill="#5059c9" /><circle cx="16" cy="5.500" r="4.500" fill="#7b83eb" />
    <path d="M21 12h9v8c0 6-9 6-9 0z" fill="#5059c9" />
    <path d="M9 12h14v9c0 11-14 11-14 0z" fill="#7b83eb" />
    <rect x="0" y="7" width="15" height="15" rx="1.500" fill="#464eb8" />
    <text x="7.500" y="18.500" fontFamily="Open Sans" fontWeight="700" fontSize="11" fill="#fff" textAnchor="middle">T</text>
  </svg>
);
const Edge = () => (
  <svg width="30" height="30" viewBox="0 0 30 30" aria-hidden="true">
    <defs>
      <linearGradient id="eg" x1="0" y1="0" x2="1" y2=".3"><stop offset="0" stopColor="#1f9fe0" /><stop offset=".5" stopColor="#2fc3d2" /><stop offset="1" stopColor="#6be04c" /></linearGradient>
      <linearGradient id="ed" x1="0" y1="0" x2="1" y2="1"><stop offset="0" stopColor="#1b8ad8" /><stop offset="1" stopColor="#0c4a8f" /></linearGradient>
    </defs>
    <path d="M0 15C0 6 7 0 15 0s15 6 15 13c0 5-4 7-7 7s-6-1-5-3 1-7-5-8C7 8 2 11 0 15z" fill="url(#eg)" />
    <path d="M0 15c1-5 6-8 11-7 6 1 8 5 7 7-2-3-7-1-7 4 0 6 8 9 16 5-3 4-8 6-12 6C7 30 0 24 0 15z" fill="url(#ed)" />
    <path d="M11 19c0-2 1-5 4-5-2 5 2 10 12 9l1 1c-5 4-17 4-17-5z" fill="#114f96" />
  </svg>
);
const Chrome = () => (
  <svg width="30" height="30" viewBox="0 0 30 30" aria-hidden="true">
    <path d="M15 15L2 7.500A15 15 0 0 1 28 7.500z" fill="#ea4335" />
    <path d="M15 15V7.500h13A15 15 0 0 1 15 30l6.500-11.500z" fill="#fbbc05" />
    <path d="M15 15l6.500 3.700L15 30A15 15 0 0 1 2 7.500l6.500 11z" fill="#34a853" />
    <circle cx="15" cy="15" r="7.200" fill="#fff" /><circle cx="15" cy="15" r="5.700" fill="#2f7cf0" />
  </svg>
);
const Notion = () => (
  <svg width="22" height="30" viewBox="0 0 24 30" aria-hidden="true">
    <path d="M1.500 5l16-1.500L22.500 8v17l-17 1.500-4-5.500z" fill="#fff" stroke="#111" strokeWidth="1.600" />
    <path d="M1.500 5l4.500 4.500 16.500-1M6 9.500v17" stroke="#111" strokeWidth="1.600" fill="none" />
    <text x="14" y="23" fontFamily="Liberation Serif" fontWeight="700" fontSize="17" fill="#111" textAnchor="middle">N</text>
  </svg>
);

/* ---------- page ---------- */

const ribbonTabs = ["Arquivo", "Página Inicial", "Inserir", "Desenhar", "Fórmulas", "Layout da Página", "Dados", "Revisão", "Exibir", "Automatizar", "Ajuda", "Power Pivot", "Análise de Tabela Dinâmica", "Design"];
const sheetTabs: { name: string; w: number; gap?: number; red?: boolean; on?: boolean }[] = [
  { name: "Menu", w: 77 },
  { name: "Produtos", w: 105 },
  { name: "Vendedores", w: 129 },
  { name: "Vendas", w: 90 },
  { name: "Consultas", w: 105, gap: 5 },
  { name: "DN_Produtos", w: 129, gap: 5, red: true },
  { name: "DN_Vendas", w: 112, gap: 5, on: true },
  { name: "DN_Vendedores", w: 152, gap: 5, red: true },
  { name: "Dashboard", w: 112 },
];

const Foot = ({ label, launcher = false }: { label: string; launcher?: boolean }) => (
  <GroupFoot>
    <FootLabel>{label}</FootLabel>
    {launcher && <Plain $w={15} $h={12} aria-label={`Mais opções de ${label}`}><Launcher /></Plain>}
  </GroupFoot>
);

const Arrow = ({ d }: { d: string }) => (
  <Icon w={10} h={10}><path d={d} fill="#636363" stroke="#636363" strokeWidth="1.500" strokeLinejoin="round" /></Icon>
);

export default function App() {
  return (
    <Screen>
      <Global />
      <TitleBar>
        <TitleLeft>
          <ExcelLogo />
          <AutoSave>
            Salvamento Automático
            <Toggle>
              <Icon w={13} h={11}><path d="M1.500 5.500L5 9l6.500-7.500" stroke="#fff" strokeWidth="2.200" /></Icon>
              <ToggleInput type="checkbox" defaultChecked />
            </Toggle>
          </AutoSave>
          <Plain aria-label="Salvar"><SaveSync /></Plain>
          <Quick $gap={6}>
            <Plain $w={24} aria-label="Refazer"><Redo /></Plain>
            <Plain $w={10} aria-label="Opções de refazer"><Chevron w={6} color="#b9bfc0" /></Plain>
          </Quick>
          <Quick $gap={4}>
            <Plain $w={24} aria-label="Desfazer"><Undo /></Plain>
            <Plain $w={12} aria-label="Opções de desfazer"><Chevron w={6} /></Plain>
          </Quick>
          <Plain $w={16} aria-label="Personalizar"><Customize /></Plain>
          <DocTitle>
            <span>Excelutilizando tabelas dinâmicas e gráficos dinâmicos&nbsp; • &nbsp;Salvo</span>
            <Chevron w={11} stroke={1.3} />
          </DocTitle>
        </TitleLeft>
        <SearchBox>
          <Magnifier />
          <SearchInput placeholder="Pesquisar" aria-label="Pesquisar" />
        </SearchBox>
        <WindowKeys>
          <Plain $w={60} aria-label="Conta"><Avatar>TF</Avatar></Plain>
          <Plain $w={58} aria-label="Dicas"><Bulb /></Plain>
          <Plain $w={60} aria-label="Minimizar"><Icon w={12}><path d="M0 5.500h12" /></Icon></Plain>
          <Plain $w={60} aria-label="Restaurar"><Icon w={14}><rect x="1" y="3.500" width="9.500" height="9.500" rx="2" /><path d="M3.500 1.200H10q3 0 3 3v6.300" /></Icon></Plain>
          <Plain $w={58} aria-label="Fechar"><Icon w={13}><path d="M.5.5l12 12M12.500.5l-12 12" /></Icon></Plain>
        </WindowKeys>
      </TitleBar>

      <TabRow>
        {ribbonTabs.map((t, i) => <RibbonTab key={t} href="#" $on={i === 1} $ctx={i > 11}>{t}</RibbonTab>)}
        <TabActions>
          <ActionButton><Icon w={14} h={14}><path d="M1 1h12v8.500H6L2.500 12.500V9.500H1z" stroke="#262626" /></Icon>Comentários</ActionButton>
          <ActionButton $primary>
            <Icon w={15} h={15}><path d="M4 4.500H1v9.500h11v-3.500M9 1l5 4-5 4V6.500c-3 0-4.500 1-5.500 4 0-4 2-6.500 5.500-7z" stroke="#fff" /></Icon>
            Compartilhamento
            <Chevron w={6} color="#fff" />
          </ActionButton>
        </TabActions>
      </TabRow>

      <Ribbon>
        <Group $w={160}>
          <GroupBody $pad={22}>
            <Big $w={56}><Paste /><BigLine>Colar</BigLine><BigLine><Chevron w={6} /></BigLine></Big>
            <ThreeRows $pad={2}>
              <SlimRow><Plain $w={28} aria-label="Recortar"><Cut /></Plain></SlimRow>
              <SlimRow><Plain $w={28} aria-label="Copiar"><Copy /></Plain><Drop w={30} label="Opções de copiar" /></SlimRow>
              <SlimRow><Plain $w={28} aria-label="Pincel de formatação"><Painter /></Plain></SlimRow>
            </ThreeRows>
          </GroupBody>
          <Foot label="Área de Transferência" launcher />
        </Group>

        <Group $w={292}>
          <GroupBody $pad={10}>
            <TwoRows>
              <Row $gap={2}>
                <Picker $w={144}><PickerSelect aria-label="Fonte"><option>Calibri</option></PickerSelect><Chevron w={6} /></Picker>
                <Picker $w={62}><PickerSelect aria-label="Tamanho da fonte"><option>11</option></PickerSelect><Chevron w={6} /></Picker>
                <Tool $w={32} aria-label="Aumentar fonte"><GrowFont /></Tool>
                <Tool $w={32} aria-label="Diminuir fonte"><ShrinkFont /></Tool>
              </Row>
              <Row>
                <Tool $w={28}><Letter $kind="b">N</Letter></Tool>
                <Tool $w={38}><Letter $kind="i">I</Letter></Tool>
                <Tool $w={26}><Letter $kind="u">S</Letter></Tool>
                <Drop w={20} label="Opções de sublinhado" />
                <Sep />
                <Tool aria-label="Bordas"><Borders /></Tool>
                <Drop label="Opções de bordas" />
                <Sep />
                <Tool $w={32} aria-label="Cor de preenchimento"><Fill /></Tool>
                <Drop label="Opções de preenchimento" />
                <Tool $w={36} aria-label="Cor da fonte"><FontColor /></Tool>
                <Drop w={12} label="Opções de cor" />
              </Row>
            </TwoRows>
          </GroupBody>
          <Foot label="Fonte" launcher />
        </Group>

        <Group $w={253}>
          <GroupBody $pad={10}>
            <TwoRows>
              <Row $gap={2}>
                <Tool aria-label="Alinhar em cima"><Lines rows={alignIcons.top} /></Tool>
                <Tool $on aria-label="Alinhar no meio"><Lines rows={alignIcons.middle} /></Tool>
                <Tool aria-label="Alinhar embaixo"><Lines rows={alignIcons.bottom} /></Tool>
                <Tool aria-label="Orientação"><Orient /></Tool>
                <Drop w={10} label="Opções de orientação" />
              </Row>
              <Row $gap={2}>
                <Tool aria-label="Alinhar à esquerda"><Lines rows={alignIcons.left} /></Tool>
                <Tool $on aria-label="Centralizar"><Lines rows={alignIcons.center} /></Tool>
                <Tool aria-label="Alinhar à direita"><Lines rows={alignIcons.right} /></Tool>
                <Tool aria-label="Diminuir recuo"><Indent out /></Tool>
                <Tool aria-label="Aumentar recuo"><Indent /></Tool>
              </Row>
            </TwoRows>
            <TallSep />
            <TwoRows>
              <Row><Tool aria-label="Quebrar texto"><Wrap /></Tool></Row>
              <Row><Tool aria-label="Mesclar e centralizar"><Merge /></Tool><Drop w={30} label="Opções de mesclar" /></Row>
            </TwoRows>
          </GroupBody>
          <Foot label="Alinhamento" launcher />
        </Group>

        <Group $w={200}>
          <GroupBody $pad={10}>
            <TwoRows>
              <Row><Picker $w={180}><PickerSelect aria-label="Formato de número"><option>Contábil</option></PickerSelect><Chevron w={6} /></Picker></Row>
              <Row>
                <Tool aria-label="Formato de contabilização"><Currency /></Tool>
                <Drop w={18} label="Opções de moeda" />
                <Tool $w={34} aria-label="Porcentagem"><Percent /></Tool>
                <Tool><Letter $kind="n">000</Letter></Tool>
                <Sep />
                <Tool aria-label="Aumentar casas decimais"><Decimals /></Tool>
                <Tool $w={34} aria-label="Diminuir casas decimais"><Decimals less /></Tool>
              </Row>
            </TwoRows>
          </GroupBody>
          <Foot label="Número" launcher />
        </Group>

        <Group $w={297}>
          <GroupBody $pad={8}>
            <Big $w={100}><CondFormat /><BigLine>Formatação</BigLine><BigLine>Condicional <Chevron w={6} /></BigLine></Big>
            <Big $w={110}><TableFormat /><BigLine>Formatar como</BigLine><BigLine>Tabela <Chevron w={6} /></BigLine></Big>
            <Big $w={70}><CellStyle /><BigLine>Estilos de</BigLine><BigLine>Célula <Chevron w={6} /></BigLine></Big>
          </GroupBody>
          <Foot label="Estilos" />
        </Group>

        <Group $w={135}>
          <GroupBody $pad={15}>
            <ThreeRows>
              <SlimRow><LabelledButton $w={84} $dim><InsertCells />Inserir</LabelledButton><Drop w={12} label="Opções de inserir" /></SlimRow>
              <SlimRow><LabelledButton $w={86}><DeleteCells />Excluir</LabelledButton><Drop w={12} label="Opções de excluir" /></SlimRow>
              <SlimRow><LabelledButton $w={98}><FormatCells />Formatar<Chevron w={6} /></LabelledButton></SlimRow>
            </ThreeRows>
          </GroupBody>
          <Foot label="Células" />
        </Group>

        <Group $w={243}>
          <GroupBody $pad={10}>
            <ThreeRows>
              <SlimRow><Tool aria-label="Soma"><Sigma /></Tool><Drop w={28} label="Opções de soma" /></SlimRow>
              <SlimRow><Tool aria-label="Preencher"><FillDown /></Tool><Drop w={14} label="Opções de preencher" /></SlimRow>
              <SlimRow><Tool aria-label="Limpar"><Eraser /></Tool><Drop w={14} label="Opções de limpar" /></SlimRow>
            </ThreeRows>
            <Big $w={78}><SortFilter /><BigLine>Classificar</BigLine><BigLine>e Filtrar <Chevron w={6} /></BigLine></Big>
            <Big $w={86}><FindSelect /><BigLine>Localizar e</BigLine><BigLine>Selecionar <Chevron w={6} /></BigLine></Big>
          </GroupBody>
          <Foot label="Edição" />
        </Group>

        <Group $w={111}>
          <GroupBody $center><Big $w={100}><Addins /><BigLine>Suplementos</BigLine></Big></GroupBody>
          <Foot label="Suplementos" />
        </Group>

        <Group $w={74}>
          <GroupBody $center><Big $w={66}><Copilot size={40} /><BigLine>Copilot</BigLine></Big></GroupBody>
        </Group>
        <Spacer />
        <CollapseSlot><Plain $w={32} $h={24} aria-label="Recolher faixa"><Chevron w={11} stroke={1.5} /></Plain></CollapseSlot>
      </Ribbon>

      <FormulaBar>
        <Field $w={127}>
          <FieldInput $pad={6} defaultValue="I5" aria-label="Caixa de nome" />
          <Plain $w={26} $h={28} aria-label="Abrir caixa de nome"><Chevron w={11} stroke={1.4} /></Plain>
        </Field>
        <Dots $m={11}><i /></Dots>
        <Field $w={107}>
          <Plain $w={30} $h={28} aria-label="Cancelar"><Icon w={16}><path d="M1 1l14 14M15 1L1 15" stroke="#b4b4b4" /></Icon></Plain>
          <Plain $w={30} $h={28} aria-label="Inserir valor"><Icon w={20} h={14}><path d="M1 7l6 6L19 1" stroke="#b4b4b4" /></Icon></Plain>
          <Plain $w={32} $h={28} aria-label="Inserir função"><Fx>fx</Fx></Plain>
          <Chevron w={10} stroke={1.2} color="#8a8a8a" />
        </Field>
        <Field>
          <FieldInput $pad={12} defaultValue="3608,8" aria-label="Barra de fórmulas" />
          <Plain $w={24} $h={28} aria-label="Expandir"><Chevron w={11} stroke={1.4} /></Plain>
        </Field>
      </FormulaBar>

      <SheetArea>
        <GridView><Sheet /></GridView>
        <VScroll>
          <Arrow d="M5 1l4 8H1z" />
          <Thumb $v />
          <Arrow d="M5 9l4-8H1z" />
        </VScroll>
      </SheetArea>

      <SheetBar>
        <NavArrows>
          <Plain $h={16} aria-label="Planilha anterior"><Icon w={8} h={14}><path d="M7 1L1 7l6 6" stroke="#8c938a" /></Icon></Plain>
          <Plain $h={16} aria-label="Próxima planilha"><Icon w={8} h={14}><path d="M1 1l6 6-6 6" stroke="#8c938a" /></Icon></Plain>
        </NavArrows>
        <TabList>
          {sheetTabs.map((t) => (
            <React.Fragment key={t.name}>
              <SheetTab $w={t.w} $red={t.red} $on={t.on}><span>{t.name}</span></SheetTab>
              <TabSep $m={t.gap ?? 0} />
            </React.Fragment>
          ))}
        </TabList>
        <Plain $w={122} aria-label="Nova planilha"><Icon w={15}><path d="M7.500 0v15M0 7.500h15" stroke="#262626" /></Icon></Plain>
        <Spacer />
        <Dots $m={19}><i /></Dots>
        <HScroll>
          <Arrow d="M1 5l8-4v8z" />
          <Thumb />
          <Arrow d="M9 5L1 1v8z" />
        </HScroll>
      </SheetBar>

      <StatusBar>
        <Small>Pronto</Small>
        <Access>
          <Icon w={18} h={19}>
            <circle cx="8" cy="3" r="2" /><path d="M1 4l5 2.500v4L3.500 18M15 4l-5 2.500v3M1 4q0-2 2-1.500l2 1M15 4q0-2-2-1.500l-2 1M8 12l-1.500 4" /><path d="M10 11l7 7M17 11l-7 7" />
          </Icon>
          <Small $bold>Acessibilidade: investigar</Small>
        </Access>
        <Spacer />
        <ViewButton $on aria-label="Normal"><Icon w={17}><path d="M1 1h15v15H1zM1 6h15M1 11h15M6 1v15M11 1v15" strokeWidth="1.500" /></Icon></ViewButton>
        <ViewButton aria-label="Layout da Página"><Icon w={18} h={17}><path d="M1 1h16v15H1zM5 4h8v9H5zM7 6.500h4M7 8.500h4M7 10.500h4" strokeWidth="1.500" /></Icon></ViewButton>
        <ViewButton aria-label="Quebra de página"><Icon w={18} h={17}><path d="M1 1h16v15H1zM1 10h10V1M6 1v9" strokeWidth="1.500" /></Icon></ViewButton>
        <Plain $w={22} $h={20} aria-label="Diminuir zoom"><Icon w={10}><path d="M0 5h10" /></Icon></Plain>
        <Zoom type="range" min={0} max={100} defaultValue={54} aria-label="Zoom" />
        <Plain $w={10} $h={20} aria-label="Aumentar zoom"><Icon w={10}><path d="M0 5h10M5 0v10" /></Icon></Plain>
        <ZoomText>120%</ZoomText>
      </StatusBar>

      <Taskbar>
        <Weather>
          <div><WeatherIcon /></div>
          <div><div>19°C</div><div>Pred. nublado</div></div>
        </Weather>
        <Center>
          <Start $w={44} $h={48} aria-label="Iniciar"><WinLogo /></Start>
          <TaskSearch>
            <Icon w={20}><circle cx="9" cy="9" r="7" stroke="#222" strokeWidth="2" /><path d="M14 14l5 5" stroke="#222" strokeWidth="2.400" /></Icon>
            <SearchInput placeholder="Pesquisar" aria-label="Pesquisar no Windows" />
            <Gator />
          </TaskSearch>
          <App48 aria-label="Visão de tarefas"><TaskView /></App48>
          <App48 aria-label="Copilot"><Copilot size={30} id="t" /></App48>
          <App48 aria-label="Explorador de Arquivos"><Explorer /></App48>
          <App48 aria-label="Microsoft Store"><Store /></App48>
          <App48 aria-label="Dell"><Dell /></App48>
          <App48 aria-label="Teams"><Teams /></App48>
          <App48 aria-label="Edge"><Edge /></App48>
          <App48 $run aria-label="Chrome"><Chrome /></App48>
          <App48 $run aria-label="Notion"><Notion /></App48>
          <App48 $on aria-label="Excel"><ExcelLogo size={30} /></App48>
        </Center>
        <Tray>
          <Plain $w={36} aria-label="Ícones ocultos"><Chevron w={12} up /></Plain>
          <Plain $w={44} aria-label="OneDrive">
            <Icon w={21} h={18}>
              <path d="M5 14a4.500 4.500 0 0 1-.5-8.500C6 0 14 0 15.500 5c5 0 5 8 1 9z" fill="#b8b8b8" stroke="#222" />
              <path d="M5 6C7 0 14 1 15.500 5c3 0 4 3 3 5L8 6z" fill="#777" stroke="none" />
              <circle cx="15" cy="12.500" r="6" fill="#fff" stroke="none" />
              <path d="M11.500 12a3.600 3.600 0 0 1 6.500-1.500M18.700 13a3.600 3.600 0 0 1-6.500 1.500M18.500 8v2.800h-2.800M11.500 17v-2.800h2.800" stroke="#1d6fd0" strokeWidth="1.300" />
            </Icon>
          </Plain>
          <TrayText $w={54}>POR<br />PTB2</TrayText>
          <Plain $w={38} aria-label="Wi-Fi">
            <Icon w={20} h={16}><path d="M1 6c5-6 13-6 18 0M3.800 8.500c4-4 8.500-4 12.400 0M6.500 11c2.300-2.300 4.700-2.300 7 0" stroke="#222" strokeWidth="1.500" /><circle cx="10" cy="13.500" r="1.600" fill="#222" stroke="none" /></Icon>
          </Plain>
          <Plain $w={24} aria-label="Volume">
            <Icon w={20} h={18}><path d="M1 6.500h3L8 2v14l-4-4.500H1zM11 6q2 3 0 6M14 4q3.500 5 0 10M16.500 1.500q5 7.500 0 15" stroke="#222" /></Icon>
          </Plain>
          <Plain $w={34} aria-label="Bateria">
            <Icon w={20} h={18}><path d="M6 4h10q2 0 2 2v7q0 2-2 2H4q-2 0-2-2V9" stroke="#222" strokeWidth="1.500" /><path d="M7 6h9v7H4V9h3zM18.500 7.500h1.500v4h-1.500zM4 0L0 6h3L2 9l5-5H4z" fill="#222" stroke="none" /></Icon>
          </Plain>
          <TrayText $w={92} $right>22:15<br />17/06/2025</TrayText>
        </Tray>
      </Taskbar>
    </Screen>
  );
}
